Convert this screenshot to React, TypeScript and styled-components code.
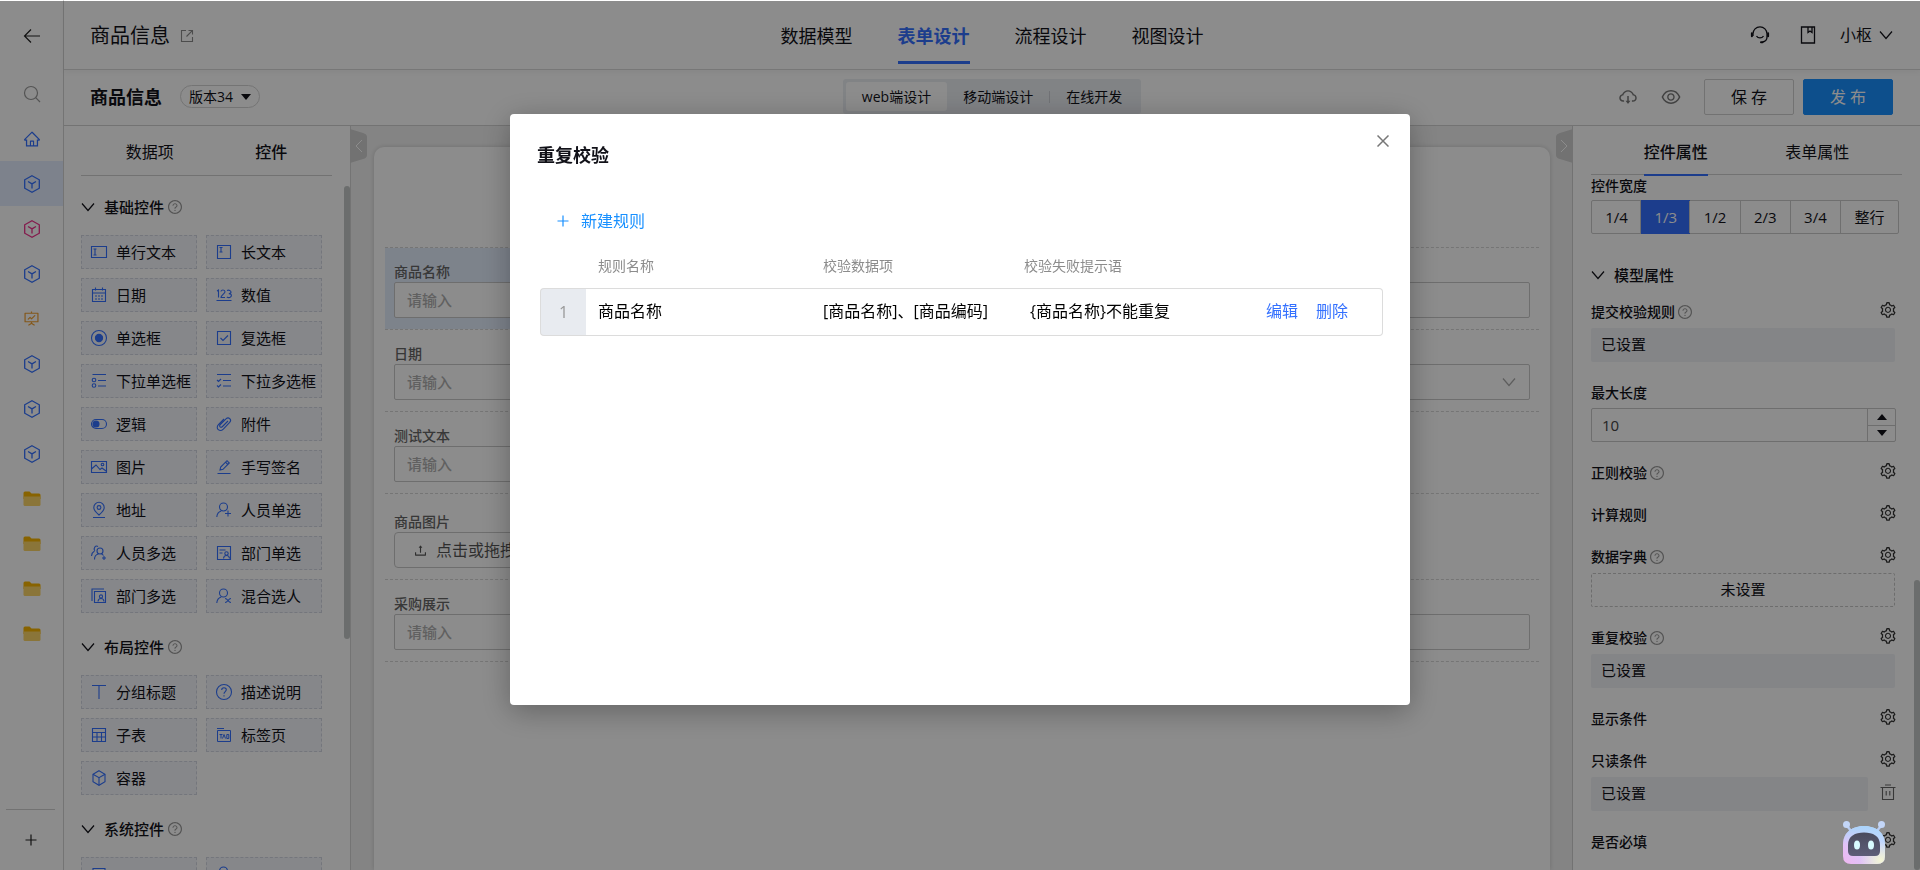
import React from 'react';
import styled, { createGlobalStyle, css } from 'styled-components';
import {
  AiOutlineCloudDownload,
  AiOutlineEye,
  AiOutlineFundProjectionScreen,
  AiOutlineHome,
  AiOutlineQuestionCircle,
  AiOutlineSetting,
  AiOutlineUpload,
} from 'react-icons/ai';

const blue = '#3370ff';
const ink = '#111118';

const GlobalStyle = createGlobalStyle`
  *, *::before, *::after { box-sizing: border-box; }
  body {
    margin: 0;
    overflow: hidden;
    background: #fff;
    color: ${ink};
    font: 14px/20px "Open Sans", "Noto Sans CJK SC", sans-serif;
  }
  button, input { font: inherit; color: inherit; }
  button { background: none; border: 0; padding: 0; cursor: pointer; }
  h1, h2, h3 { margin: 0; }
  a { text-decoration: none; }
  svg { display: block; flex: none; }
`;

/* ---------- shell ---------- */

const Page = styled.div`
  display: flex;
  height: 100vh;
`;

const Rail = styled.nav`
  flex: 0 0 64px;
  display: flex;
  flex-direction: column;
  border-right: 1px solid #d4d4d4;
`;

const RailButton = styled.button<{ $tint?: string; $active?: boolean; $tall?: number }>`
  display: flex;
  align-items: center;
  justify-content: center;
  height: ${(p) => p.$tall ?? 45}px;
  color: ${(p) => p.$tint ?? '#222'};
  background: ${(p) => (p.$active ? '#e4edff' : 'transparent')};
`;

const RailFoot = styled.div`
  display: flex;
  flex-direction: column;
  margin: auto 8px 0 6px;
  border-top: 1px solid #cfcfcf;
`;

const Main = styled.div`
  flex: 1;
  min-width: 0;
  display: flex;
  flex-direction: column;
`;

const TopBar = styled.header`
  display: grid;
  grid-template-columns: 1fr auto 1fr;
  height: 70px;
  border-bottom: 1px solid #d9d9d9;
  box-shadow: 0 2px 6px rgba(0, 0, 0, 0.05);
`;

const AppName = styled.div`
  display: flex;
  align-items: center;
  gap: 10px;
  padding: 2px 0 0 26px;
  font-size: 20px;
  line-height: 28px;
`;

const TopTabs = styled.nav`
  display: flex;
  gap: 45px;
  padding-bottom: 5px;
`;

const TopTab = styled.a<{ $active?: boolean }>`
  display: flex;
  align-items: center;
  padding-top: 10px;
  border-bottom: 3px solid ${(p) => (p.$active ? blue : 'transparent')};
  color: ${(p) => (p.$active ? blue : ink)};
  font-size: 18px;
  line-height: 28px;
  font-weight: ${(p) => (p.$active ? 700 : 400)};
`;

const TopTools = styled.div`
  display: flex;
  align-items: center;
  justify-content: flex-end;
  padding-right: 27px;
`;

const ToolButton = styled.button`
  display: flex;
  justify-content: center;
  width: 48px;
`;

const UserButton = styled.button`
  display: flex;
  align-items: center;
  gap: 7px;
  margin-left: 8px;
  font-size: 16px;
  line-height: 24px;
`;

const SubBar = styled.div`
  display: grid;
  grid-template-columns: 1fr auto 1fr;
  align-items: center;
  height: 56px;
  padding-bottom: 2px;
  border-bottom: 1px solid #d2d2d2;
`;

const PageTitle = styled.div`
  display: flex;
  align-items: center;
  gap: 18px;
  padding-left: 26px;
  h1 { font-size: 18px; line-height: 28px; }
`;

const VersionButton = styled.button`
  display: flex;
  align-items: center;
  gap: 8px;
  height: 23px;
  padding: 0 8px;
  border: 1px solid #d4d4d4;
  border-radius: 12px;
`;

const ModeSwitch = styled.div`
  display: flex;
  align-items: center;
  padding: 3px;
  background: #ebeef3;
  border-radius: 3px;
`;

const ModeButton = styled.button<{ $active?: boolean; $ruled?: boolean }>`
  display: flex;
  align-items: center;
  height: 29px;
  padding: 0 16px;
  border-radius: 3px;
  background: ${(p) => (p.$active ? '#fff' : 'transparent')};
  &::before {
    content: '';
    display: ${(p) => (p.$ruled ? 'block' : 'none')};
    width: 1px;
    height: 12px;
    margin: 0 16px 0 -16px;
    background: #cdd0d6;
  }
`;

const Actions = styled.div`
  display: flex;
  align-items: center;
  justify-content: flex-end;
  gap: 22px;
  padding-right: 27px;
  color: #777;
`;

const ActionPair = styled.div`
  display: flex;
  gap: 9px;
`;

const ActionButton = styled.button<{ $primary?: boolean }>`
  width: 90px;
  height: 36px;
  border: 1px solid ${(p) => (p.$primary ? '#1890ff' : '#cfcfcf')};
  border-radius: 2px;
  background: ${(p) => (p.$primary ? '#1890ff' : '#fff')};
  color: ${(p) => (p.$primary ? '#fff' : ink)};
  font-size: 16px;
`;

const Workspace = styled.div`
  flex: 1;
  min-height: 0;
  display: flex;
`;

/* ---------- left: control library ---------- */

const Library = styled.aside`
  position: relative;
  flex: 0 0 287px;
  overflow: hidden;
  padding: 0 28px 0 17px;
  border-right: 1px solid #d4d4d4;
`;

const Thumb = styled.span<{ $top: string; $height: string }>`
  position: absolute;
  right: 0;
  top: ${(p) => p.$top};
  height: ${(p) => p.$height};
  width: 6px;
  border-radius: 3px;
  background: #c4c7c6;
`;

const PanelTabs = styled.div<{ $wide?: boolean }>`
  display: grid;
  grid-template-columns: 1fr 1fr;
  justify-items: center;
  height: ${(p) => (p.$wide ? 49 : 50)}px;
  ${(p) => p.$wide ? css`padding: 0 14px;` : css`padding-left: 8px; margin-right: -10px;`}
  border-bottom: 1px solid #cfcfcf;
`;

const PanelTab = styled.button<{ $bold?: boolean; $marked?: boolean }>`
  height: 50px;
  padding-top: 4px;
  font-size: 16px;
  font-weight: ${(p) => (p.$bold ? 500 : 400)};
  border-bottom: 2px solid ${(p) => (p.$marked ? blue : 'transparent')};
`;

const GroupHead = styled.h2`
  display: flex;
  align-items: center;
  gap: 9px;
  height: 24px;
  margin-top: 19px;
  font-size: 15px;
  font-weight: 500;
  > span { margin-right: -6px; }
`;

const Hint = styled(AiOutlineQuestionCircle)`
  color: #999;
`;

const WidgetGrid = styled.div`
  display: grid;
  grid-template-columns: 1fr 1fr;
  gap: 9px;
  margin: 16px 0 22px;
`;

const Widget = styled.button`
  display: flex;
  align-items: center;
  gap: 8px;
  height: 34px;
  padding: 0 0 0 8px;
  border: 1px dashed #d3d7e2;
  background: #f4f6fc;
  font-size: 15px;
  white-space: nowrap;
  svg { color: ${blue}; }
`;

/* ---------- centre: form canvas ---------- */

const Canvas = styled.main`
  position: relative;
  flex: 1;
  min-width: 0;
  display: flex;
  padding: 21px 22px 0 23px;
  background: #f1f1f1;
`;

const Fold = styled.button<{ $side: 'left' | 'right' }>`
  position: absolute;
  top: 3px;
  ${(p) => p.$side}: -1px;
`;

const FormCard = styled.section`
  flex: 1;
  padding: 100px 11px 0;
  border-radius: 10px 10px 0 0;
  background: #fff;
  box-shadow: 0 0 5px rgba(0, 0, 0, 0.16);
`;

const FormRows = styled.div`
  border-top: 1px dashed #d6d6d6;
`;

const FormRow = styled.div<{ $roomy?: boolean }>`
  display: grid;
  grid-template-columns: repeat(3, 1fr);
  height: ${(p) => (p.$roomy ? 86 : 82)}px;
  border-bottom: 1px dashed #d6d6d6;
`;

const Field = styled.label<{ $selected?: boolean; $roomy?: boolean }>`
  display: flex;
  flex-direction: column;
  padding: ${(p) => (p.$roomy ? 18 : 14)}px 9px 0;
  background: ${(p) => (p.$selected ? '#e4eefe' : 'transparent')};
  color: #666;
  font-weight: 500;
`;

const LastField = styled(Field)`
  grid-column: 3;
  padding-top: 34px;
`;

const TextBox = styled.input`
  width: 100%;
  height: 36px;
  padding: 0 12px;
  border: 1px solid #c8c8c8;
  border-radius: 2px;
  background: #fff;
  font-size: 15px;
  &::placeholder { color: #b0b0b0; opacity: 1; }
`;

const SelectBox = styled.button`
  display: flex;
  align-items: center;
  justify-content: flex-end;
  height: 36px;
  padding: 0 13px;
  border: 1px solid #c8c8c8;
  border-radius: 2px;
  color: #aaa;
`;

const UploadButton = styled.button`
  display: flex;
  align-items: center;
  gap: 8px;
  height: 36px;
  padding: 0 18px;
  border: 1px solid #c8c8c8;
  border-radius: 4px;
  font-size: 16px;
  font-weight: 400;
  color: #555;
`;

/* ---------- right: properties ---------- */

const Inspector = styled.aside`
  position: relative;
  flex: 0 0 348px;
  overflow: hidden;
  padding: 0 18px;
  border-left: 1px solid #d0d0d0;
`;

const InspectorBody = styled.div`
  padding-right: 7px;
`;

const PropLabel = styled.div`
  display: flex;
  align-items: center;
  gap: 2px;
  height: 22px;
  font-weight: 500;
  > button { margin-left: auto; margin-top: -4px; margin-right: -2px; color: #333; }
`;

const Prop = styled.div`
  margin-bottom: 20px;
`;

const WidthChoices = styled.div`
  display: flex;
  height: 34px;
  margin: 3px -4px 29px 0;
  border: 1px solid #cbcbcb;
  border-radius: 2px;
`;

const WidthChoice = styled.label<{ $active?: boolean; $last?: boolean }>`
  display: flex;
  align-items: center;
  justify-content: center;
  flex: ${(p) => (p.$last ? '0 0 58px' : '1')};
  margin: ${(p) => (p.$active ? '-1px' : 0)};
  background: ${(p) => (p.$active ? blue : 'transparent')};
  color: ${(p) => (p.$active ? '#fff' : ink)};
  font-size: 15px;
  & + & { border-left: 1px solid ${(p) => (p.$active ? blue : '#cbcbcb')}; }
  input { position: absolute; opacity: 0; }
`;

const GroupLine = styled(GroupHead)`
  margin: 0 0 14px;
`;

const ValueBox = styled.div<{ $empty?: boolean }>`
  flex: 1;
  height: 34px;
  margin-top: 5px;
  padding: 0 10px;
  border-radius: 2px;
  font-size: 15px;
  line-height: 32px;
  background: #f1f3f6;
  ${(p) => p.$empty && css`
    background: transparent;
    border: 1px dashed #c6c6c6;
    line-height: 30px;
    text-align: center;
  `}
`;

const ValueRow = styled.div`
  display: flex;
  align-items: center;
  gap: 12px;
  margin-right: -1px;
`;

const NumberBox = styled.div`
  display: flex;
  height: 34px;
  margin: 4px -1px 20px 0;
  border: 1px solid #c8c8c8;
  border-radius: 2px;
  input {
    flex: 1;
    min-width: 0;
    padding: 0 10px;
    border: 0;
    background: none;
    font-size: 15px;
    color: #444;
  }
`;

const Steppers = styled.div`
  display: flex;
  flex-direction: column;
  width: 28px;
  border-left: 1px solid #c8c8c8;
  button {
    flex: 1;
    display: flex;
    align-items: center;
    justify-content: center;
  }
  button + button { border-top: 1px solid #c8c8c8; }
`;

/* ---------- dialog ---------- */

const Mask = styled.div`
  position: fixed;
  inset: 1px 0 0;
  display: flex;
  align-items: flex-start;
  justify-content: center;
  padding-top: 113px;
  background: rgba(0, 0, 0, 0.45);
`;

const Dialog = styled.div`
  position: relative;
  width: 900px;
  max-width: 100%;
  min-height: 591px;
  padding: 27px;
  border-radius: 4px;
  background: #fff;
  box-shadow: 0 6px 30px rgba(0, 0, 0, 0.3);
  h2 { font-size: 18px; line-height: 28px; font-weight: 700; }
`;

const CloseButton = styled.button`
  position: absolute;
  top: 21px;
  right: 21px;
  color: #777;
`;

const AddButton = styled.button`
  display: flex;
  align-items: center;
  gap: 12px;
  margin: 40px 0 23px 20px;
  color: #1890ff;
  font-size: 16px;
  line-height: 24px;
`;

const RuleTable = styled.table`
  width: 843px;
  margin-left: 3px;
  table-layout: fixed;
  border-spacing: 0;
  th {
    height: 32px;
    padding: 0 0 12px 12px;
    text-align: left;
    font-weight: 400;
    color: #8c8c8c;
  }
  th:nth-child(4) { padding-left: 6px; }
  td {
    height: 48px;
    padding: 0 0 2px 12px;
    border: solid #dcdcdc;
    border-width: 1px 0;
    font-size: 16px;
    color: #000;
    white-space: nowrap;
  }
  td:first-child {
    padding: 0;
    text-align: center;
    color: #999;
    background: #e8ebf0;
    border-left-width: 1px;
    border-radius: 4px 0 0 4px;
  }
  td:last-child { border-right-width: 1px; border-radius: 0 4px 4px 0; }
`;

const RuleLink = styled.a`
  margin-right: 18px;
  color: ${blue};
`;

const Robot = styled.button`
  position: fixed;
  right: 32px;
  bottom: 4px;
`;

/* ---------- drawings ---------- */

type Draw = React.ReactNode;

const Glyph = ({ children }: { children: Draw }) => (
  <svg width="18" height="18" viewBox="0 0 18 18" fill="none" stroke="currentColor" strokeWidth="1.1" aria-hidden="true">
    {children}
  </svg>
);

const Chevron = () => (
  <svg width="14" height="10" viewBox="0 0 14 10" fill="none" stroke="currentColor" strokeWidth="1.2" aria-hidden="true">
    <path d="M1 1.500 7 8.500l6-7" />
  </svg>
);

const BackArrow = () => (
  <svg width="18" height="16" viewBox="0 0 18 16" fill="none" stroke="currentColor" strokeWidth="1.2" aria-hidden="true">
    <path d="M17 8H1.500M8 1.500 1.500 8 8 14.500" />
  </svg>
);

const SearchMark = () => (
  <svg width="18" height="18" viewBox="0 0 18 18" fill="none" stroke="currentColor" strokeWidth="1.2" aria-hidden="true">
    <circle cx="8" cy="8" r="6.500" />
    <path d="M12.700 12.700 17 17" />
  </svg>
);

const Plus = () => (
  <svg width="12" height="12" viewBox="0 0 12 12" fill="none" stroke="currentColor" strokeWidth="1.2" aria-hidden="true">
    <path d="M6 .5v11M.5 6h11" />
  </svg>
);

const Cross = () => (
  <svg width="12" height="12" viewBox="0 0 12 12" fill="none" stroke="currentColor" strokeWidth="1.500" aria-hidden="true">
    <path d="M.5.5l11 11M11.500.5l-11 11" />
  </svg>
);

const cubeDraw = (
  <>
    <path d="M9 1.700 15 5.200v7.600L9 16.300 3 12.800V5.200z" />
    <path d="M3 5.200 9 8.700l6-3.500M9 8.700v7.600" />
  </>
);

const Cube = () => (
  <svg width="18" height="18" viewBox="0 0 18 18" fill="none" stroke="currentColor" strokeWidth="1.3" aria-hidden="true">
    <path d="M9 .8 16.300 4.800v8.400L9 17.200 1.700 13.200V4.800z" />
    <path d="M5 6.500 9 8.900l4-2.400M9 8.900v4.600" />
  </svg>
);

const Folder = () => (
  <svg width="18" height="16" viewBox="0 0 18 16" aria-hidden="true">
    <path d="M.5 2A1.500 1.500 0 0 1 2 .5h4.500L8.500 2.500H16A1.500 1.500 0 0 1 17.500 4v4H.5z" fill="#f7b500" />
    <path d="M.5 5.500h17v8A1.500 1.500 0 0 1 16 15H2a1.500 1.500 0 0 1-1.500-1.500z" fill="#fcd568" />
  </svg>
);

const Caret = ({ up }: { up?: boolean }) => (
  <svg width="10" height="6" viewBox="0 0 10 6" fill="currentColor" aria-hidden="true">
    <path d={up ? 'M0 6 5 0l5 6z' : 'M0 0h10L5 6z'} />
  </svg>
);

const Share = () => (
  <svg width="14" height="14" viewBox="0 0 14 14" fill="none" stroke="#8a8a8a" strokeWidth="1.1" aria-hidden="true">
    <path d="M6 1.500H1.500v11h11V8M8.500 1.500h4v4M12.300 1.700 6.500 7.500" />
  </svg>
);

const Headset = () => (
  <svg width="20" height="20" viewBox="0 0 20 20" fill="none" stroke="currentColor" strokeWidth="1.3" aria-hidden="true">
    <path d="M3 11V8.800a7 7 0 0 1 14 0V12c0 3-1.800 4.600-4.500 5" />
    <path d="M6.500 11c1.600 2.600 5.400 2.600 7 0" />
    <path d="M1.900 8.300v3M18.100 8.300v3" strokeWidth="2" strokeLinecap="round" />
    <path d="M11 17.200h1.500" strokeWidth="2" strokeLinecap="round" />
  </svg>
);

const Book = () => (
  <svg width="16" height="18" viewBox="0 0 16 18" fill="none" stroke="currentColor" strokeWidth="1.3" aria-hidden="true">
    <path d="M1.500 1h13v16h-13zM8 1v5.500l2-1.500 2 1.500V1" />
  </svg>
);

const Trash = () => (
  <svg width="16" height="16" viewBox="0 0 16 16" fill="none" stroke="#666" strokeWidth="1.100" aria-hidden="true">
    <path d="M.5 3.500h15M5 1h6M2.500 3.500v12h11v-12M6.200 7v4.500M9.800 7v4.500" />
  </svg>
);

const FoldShape = ({ side }: { side: 'left' | 'right' }) => (
  <svg width="17" height="34" viewBox="0 0 17 34" aria-hidden="true">
    {side === 'left' ? (
      <>
        <path d="M0 0 13 4q4 1 4 4v18q0 3-4 4L0 34z" fill="#cfcfcf" />
        <path d="M12 11 6 17l6 6" fill="none" stroke="#fff" />
      </>
    ) : (
      <>
        <path d="M17 0 4 4Q0 5 0 8v18q0 3 4 4l13 4z" fill="#cfcfcf" />
        <path d="M5 11l6 6-6 6" fill="none" stroke="#fff" />
      </>
    )}
  </svg>
);

const RobotFace = () => (
  <svg width="46" height="46" viewBox="0 0 46 46" aria-hidden="true">
    <defs>
      <linearGradient id="shell" x1="0" y1="1" x2="1" y2="0.200">
        <stop offset="0" stopColor="#f0b6f0" />
        <stop offset="0.450" stopColor="#d9c8fa" />
        <stop offset="1" stopColor="#b9dcff" />
      </linearGradient>
      <radialGradient id="glow" cx="0.900" cy="0.900" r="0.500">
        <stop offset="0" stopColor="#f4f6d4" />
        <stop offset="1" stopColor="#f4f6d4" stopOpacity="0" />
      </radialGradient>
      <linearGradient id="crown" x1="0" y1="0" x2="0" y2="1">
        <stop offset="0" stopColor="#a9d4fb" />
        <stop offset="0.500" stopColor="#b9d4fb" stopOpacity="0" />
      </linearGradient>
      <linearGradient id="screen" x1="0" y1="0" x2="0" y2="1">
        <stop offset="0" stopColor="#4a4b5e" />
        <stop offset="1" stopColor="#5d5e78" />
      </linearGradient>
    </defs>
    <path d="M5 6l5 6M39 6l-5 6" stroke="#b9cdf3" strokeWidth="2.400" />
    <circle cx="4.500" cy="4.500" r="3.500" fill="#c3d6f8" />
    <circle cx="39.500" cy="4.500" r="3.500" fill="#c3d6f8" />
    {['shell', 'glow', 'crown'].map((id) => (
      <path key={id} d="M1 24C1 12 11 6 22 6s21 6 21 18v12q0 8-8 8H9q-8 0-8-8z" fill={`url(#${id})`} />
    ))}
    <path d="M6 25C6 16 13 12.500 22 12.500S38 16 38 25v6q0 5-5 5H11q-5 0-5-5z" fill="url(#screen)" />
    <ellipse cx="15" cy="25" rx="3" ry="4.500" fill="#d9fbff" />
    <ellipse cx="29" cy="25" rx="3" ry="4.500" fill="#d9fbff" />
  </svg>
);

const person = <><circle cx="8.500" cy="6" r="4" /><path d="M1.800 16c.2-3.200 2-5.200 4.400-6" /></>;

const base: [string, Draw][] = [
  ['单行文本', <><path d="M1.500 3.500h15v11h-15z" /><path d="M3.500 6h3M3.500 12h3M5 6v6" /></>],
  ['长文本', <><path d="M2.500 2.500h13v13h-13z" /><path d="M4.500 4.500h3M4.500 9h3M6 4.500V9" /></>],
  ['日期', <><path d="M2.500 3.500h13v12h-13zM2.500 7h13M5.500 1.500v3M12.500 1.500v3" /><path d="M5 10h8M5 13h8" strokeDasharray="2 1" /></>],
  ['数值', <path d="M2 5l1.500-1v7.500M6 5.500C6 3.500 10 3.500 10 5.800 10 7.500 6 9 6 11.500h4M12 4.500c2-1 4 .2 4 1.500 0 1.200-1 1.600-2.200 1.600 1.200 0 2.600.5 2.600 2 0 2-2.800 2.500-4.600 1.400M1.500 14.500h15" />],
  ['单选框', <><circle cx="9" cy="9" r="7.500" /><circle cx="9" cy="9" r="3.600" fill="currentColor" /></>],
  ['复选框', <path d="M2.500 2.500h13v13h-13zM5.500 9l2.500 2.500 5-5" />],
  ['下拉单选框', <><path d="M2.500 2.500h13.500M8 8.500h8M8 14h8" /><circle cx="4" cy="8" r="1.800" /><circle cx="4" cy="13.500" r="1.800" /></>],
  ['下拉多选框', <path d="M2 2.500h14M8 8.500h8M8 14h8M2 8l1.500 1.500L6 7M2 13.500 3.500 15 6 12.500" />],
  ['逻辑', <><rect x="1.500" y="4.500" width="15" height="9" rx="4.500" /><circle cx="6" cy="9" r="3" fill="currentColor" /></>],
  ['附件', <path d="M13 6 7.500 11.500c-1.800 1.800-4-.2-2.200-2L11 3.800c2.600-2.400 6.200.8 3.700 3.600l-6.400 6.700c-3.500 3.500-8.300-.8-4.900-4.400L9 4" />],
  ['图片', <><path d="M1.500 3.500h15v11h-15zM1.500 11 6 7l4 4.500 2-1.500 4 3" /><circle cx="12.500" cy="6.500" r="1.300" /></>],
  ['手写签名', <path d="M2.500 15.500h13M5 12l.7-3L12 2.700l2.300 2.300L8 11.300zM10.500 4.200l2.300 2.300" />],
  ['地址', <><path d="M9 14C5.500 11 3.800 9 3.800 6.500a5.200 5.200 0 0 1 10.400 0C14.200 9 12.500 11 9 14zM3 16.500h12" /><circle cx="9" cy="6.500" r="1.900" /></>],
  ['人员单选', <>{person}<path d="M10 12.500h6M13 9.500v6" /></>],
  ['人员多选', <><circle cx="10" cy="7" r="3" /><path d="M4.500 15.500c0-3 1.500-5 4-5.500M11.500 10c.8.300 1.500.8 2 1.500M8 2.500C5.500 1 3 4 4.800 6.800M1.500 12c.2-2.200 1.200-4 3-5M12 14h4M14 12v4" /></>],
  ['部门单选', <><path d="M2.500 2.500h13v13h-13zM4.500 6h6M4.500 9h3" /><circle cx="11.500" cy="9.500" r="1.700" /><path d="M8.500 14.500c.3-4 5.700-4 6 0" /></>],
  ['部门多选', <><path d="M4.500 4.500h11v11h-11zM2 14V2h12" /><circle cx="11" cy="9.500" r="1.600" /><path d="M8 14.500c.3-4 5.700-4 6 0" /></>],
  ['混合选人', <>{person}<path d="M10 11.500c3 0 3 4 6 4M10 15.500c3 0 3-4 6-4" /></>],
];

const layout: [string, Draw][] = [
  ['分组标题', <path d="M2 2.500h14M9 2.500V16" />],
  ['描述说明', <><circle cx="9" cy="9" r="7.500" /><path d="M6.700 7c0-3 4.600-3 4.600-.2C11.300 8.500 9 8.700 9 10.800M9 12.200v1.300" /></>],
  ['子表', <path d="M2.500 2.500h13v13h-13zM2.500 6.500h13M2.500 11h13M7 6.500v9M11.500 6.500v9" />],
  ['标签页', <path d="M2.500 4.500h13v11h-13zM2 2.500h7M4.500 8.500h3M6 8.500v4M7.500 12.500l1.500-4 1.500 4M11.800 8.500v4h2v-4z" strokeWidth="1" />],
  ['容器', cubeDraw],
];

const system: [string, Draw][] = [
  ['', <path d="M3 3.500h12v12H3z" />],
  ['', person],
];

/* ---------- parts ---------- */

const WidgetGroup = ({ title, items }: { title: string; items: [string, Draw][] }) => (
  <section>
    <GroupHead>
      <Chevron />
      <span>{title}</span>
      <Hint size={16} />
    </GroupHead>
    <WidgetGrid>
      {items.map(([name, draw], i) => (
        <Widget key={i}>
          <Glyph>{draw}</Glyph>
          {name}
        </Widget>
      ))}
    </WidgetGrid>
  </section>
);

const Gear = ({ name }: { name: string }) => (
  <button aria-label={`设置${name}`}>
    <AiOutlineSetting size={18} />
  </button>
);

const Property = ({ name, hint, value, empty, removable }: {
  name: string; hint?: boolean; value?: string; empty?: boolean; removable?: boolean;
}) => (
  <Prop>
    <PropLabel>
      {name}
      {hint && <Hint size={16} />}
      <Gear name={name} />
    </PropLabel>
    {value && !removable && <ValueBox $empty={empty}>{value}</ValueBox>}
    {value && removable && (
      <ValueRow>
        <ValueBox>{value}</ValueBox>
        <button aria-label="删除"><Trash /></button>
      </ValueRow>
    )}
  </Prop>
);

const railItems: [string, Draw, string][] = [
  ['首页', <AiOutlineHome size={18} />, blue],
  ['表单一', <Cube />, blue],
  ['表单二', <Cube />, '#f0308c'],
  ['表单三', <Cube />, blue],
  ['看板', <AiOutlineFundProjectionScreen size={17} />, '#f0a030'],
  ['表单四', <Cube />, blue],
  ['表单五', <Cube />, blue],
  ['表单六', <Cube />, blue],
  ['分组一', <Folder />, blue],
  ['分组二', <Folder />, blue],
  ['分组三', <Folder />, blue],
  ['分组四', <Folder />, blue],
];

export default function App() {
  return (
    <>
      <GlobalStyle />
      <Page>
        <Rail>
          <RailButton $tall={71} aria-label="返回"><BackArrow /></RailButton>
          <RailButton $tall={45} $tint="#999" aria-label="搜索"><SearchMark /></RailButton>
          {railItems.map(([name, icon, tint], i) => (
            <RailButton key={name} aria-label={name} $tint={tint} $active={i === 1}>{icon}</RailButton>
          ))}
          <RailFoot>
            <RailButton $tall={60} aria-label="新增"><Plus /></RailButton>
          </RailFoot>
        </Rail>

        <Main>
          <TopBar>
            <AppName>商品信息<Share /></AppName>
            <TopTabs>
              <TopTab href="#model">数据模型</TopTab>
              <TopTab href="#form" $active>表单设计</TopTab>
              <TopTab href="#flow">流程设计</TopTab>
              <TopTab href="#view">视图设计</TopTab>
            </TopTabs>
            <TopTools>
              <ToolButton aria-label="客服"><Headset /></ToolButton>
              <ToolButton aria-label="手册"><Book /></ToolButton>
              <UserButton>小枢<Chevron /></UserButton>
            </TopTools>
          </TopBar>

          <SubBar>
            <PageTitle>
              <h1>商品信息</h1>
              <VersionButton>版本34<Caret /></VersionButton>
            </PageTitle>
            <ModeSwitch>
              <ModeButton $active>web端设计</ModeButton>
              <ModeButton>移动端设计</ModeButton>
              <ModeButton $ruled>在线开发</ModeButton>
            </ModeSwitch>
            <Actions>
              <button aria-label="下载"><AiOutlineCloudDownload size={20} /></button>
              <button aria-label="预览"><AiOutlineEye size={22} /></button>
              <ActionPair>
                <ActionButton>保 存</ActionButton>
                <ActionButton $primary>发 布</ActionButton>
              </ActionPair>
            </Actions>
          </SubBar>

          <Workspace>
            <Library>
              <PanelTabs>
                <PanelTab>数据项</PanelTab>
                <PanelTab $bold>控件</PanelTab>
              </PanelTabs>
              <WidgetGroup title="基础控件" items={base} />
              <WidgetGroup title="布局控件" items={layout} />
              <WidgetGroup title="系统控件" items={system} />
              <Thumb $top="8%" $height="61%" />
            </Library>

            <Canvas>
              <FormCard>
                <FormRows>
                  <FormRow>
                    <Field $selected>商品名称<TextBox placeholder="请输入" /></Field>
                    <LastField><TextBox aria-label="商品编码" /></LastField>
                  </FormRow>
                  <FormRow>
                    <Field>日期<TextBox placeholder="请输入" /></Field>
                    <LastField as="div"><SelectBox aria-label="选择"><Chevron /></SelectBox></LastField>
                  </FormRow>
                  <FormRow>
                    <Field>测试文本<TextBox placeholder="请输入" /></Field>
                  </FormRow>
                  <FormRow $roomy>
                    <Field as="div" $roomy>
                      商品图片
                      <UploadButton><AiOutlineUpload size={15} />点击或拖拽上传</UploadButton>
                    </Field>
                  </FormRow>
                  <FormRow>
                    <Field>采购展示<TextBox placeholder="请输入" /></Field>
                    <LastField><TextBox aria-label="备注" /></LastField>
                  </FormRow>
                </FormRows>
              </FormCard>
              <Fold $side="left" aria-label="收起左栏"><FoldShape side="left" /></Fold>
              <Fold $side="right" aria-label="收起右栏"><FoldShape side="right" /></Fold>
            </Canvas>

            <Inspector>
              <PanelTabs $wide>
                <PanelTab $bold $marked>控件属性</PanelTab>
                <PanelTab>表单属性</PanelTab>
              </PanelTabs>
              <InspectorBody>
                <PropLabel>控件宽度</PropLabel>
                <WidthChoices>
                  {['1/4', '1/3', '1/2', '2/3', '3/4', '整行'].map((w, i) => (
                    <WidthChoice key={w} $active={i === 1} $last={i === 5}>
                      <input type="radio" name="width" defaultChecked={i === 1} />
                      {w}
                    </WidthChoice>
                  ))}
                </WidthChoices>
                <GroupLine><Chevron /><span>模型属性</span></GroupLine>
                <Property name="提交校验规则" hint value="已设置" />
                <PropLabel as="label" htmlFor="max-length">最大长度</PropLabel>
                <NumberBox>
                  <input id="max-length" defaultValue="10" />
                  <Steppers>
                    <button aria-label="增加"><Caret up /></button>
                    <button aria-label="减少"><Caret /></button>
                  </Steppers>
                </NumberBox>
                <Property name="正则校验" hint />
                <Property name="计算规则" />
                <Property name="数据字典" hint value="未设置" empty />
                <Property name="重复校验" hint value="已设置" />
                <Property name="显示条件" />
                <Property name="只读条件" value="已设置" removable />
                <Property name="是否必填" />
              </InspectorBody>
              <Thumb $top="61%" $height="39%" />
            </Inspector>
          </Workspace>
        </Main>
      </Page>

      <Mask>
        <Dialog role="dialog" aria-modal="true" aria-labelledby="dialog-title">
          <h2 id="dialog-title">重复校验</h2>
          <CloseButton aria-label="关闭"><Cross /></CloseButton>
          <AddButton><Plus />新建规则</AddButton>
          <RuleTable>
            <colgroup>
              <col style={{ width: 46 }} />
              <col style={{ width: 225 }} />
              <col style={{ width: 207 }} />
              <col style={{ width: 236 }} />
              <col />
            </colgroup>
            <thead>
              <tr>
                <th aria-label="序号" />
                <th>规则名称</th>
                <th>校验数据项</th>
                <th>校验失败提示语</th>
                <th aria-label="操作" />
              </tr>
            </thead>
            <tbody>
              <tr>
                <td>1</td>
                <td>商品名称</td>
                <td>[商品名称]、[商品编码]</td>
                <td>{'{商品名称}不能重复'}</td>
                <td>
                  <RuleLink href="#edit">编辑</RuleLink>
                  <RuleLink href="#delete">删除</RuleLink>
                </td>
              </tr>
            </tbody>
          </RuleTable>
        </Dialog>
      </Mask>
      <Robot aria-label="智能助手"><RobotFace /></Robot>
    </>
  );
}
